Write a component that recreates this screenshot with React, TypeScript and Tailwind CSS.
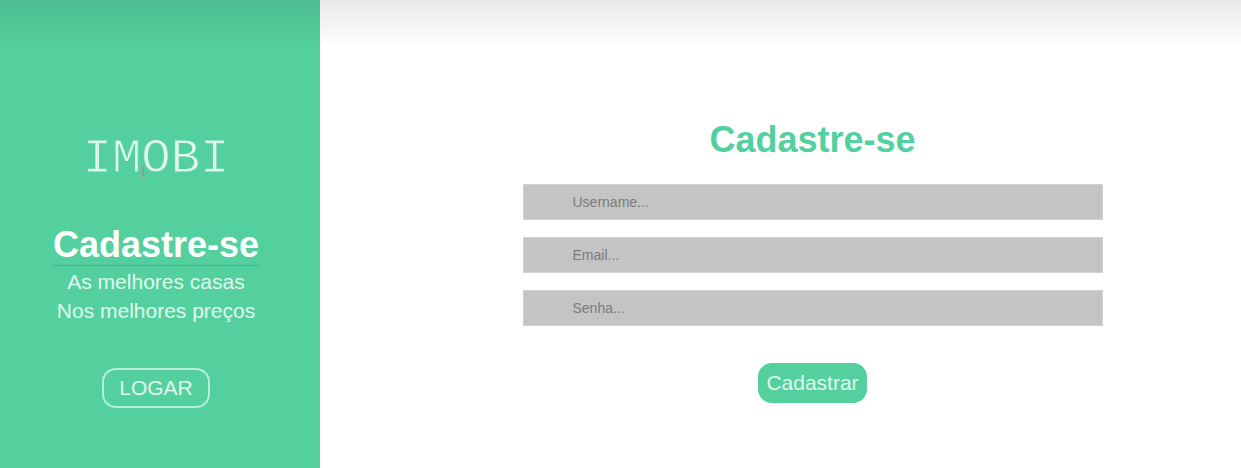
import React from "react";

const fields = [
  { id: "username", type: "text", placeholder: "Username..." },
  { id: "email", type: "email", placeholder: "Email..." },
  { id: "password", type: "password", placeholder: "Senha..." },
];

function TextCursor() {
  return (
    <svg
      aria-hidden="true"
      viewBox="0 0 6 12"
      className="absolute left-[58px] top-[35px] h-3 w-1.5"
      fill="none"
    >
      <path d="M0.5 1h5M3 1v10M0.5 11h5" stroke="#a9dcc2" strokeWidth="2" />
      <path d="M1 1h1.5M3.5 1H5M3 1.5v9M1 11h1.5M3.5 11H5" stroke="#4f7262" strokeWidth="1" />
    </svg>
  );
}

function Sidebar() {
  return (
    <aside className="flex w-80 shrink-0 flex-col items-center bg-[#54d09e] pt-[130px] pr-2 text-[21px] text-[#e0f9ee]">
      <div className="relative">
        <p className="font-['Liberation_Mono',monospace] text-[49px] leading-[58px] [-webkit-text-stroke:1px_#54d09e]">
          IMOBI
        </p>
        <TextCursor />
      </div>
      <h2 className="mt-9 border-b border-[#3fb0a2] text-[36px] leading-[41px] font-bold text-white">
        Cadastre-se
      </h2>
      <p className="mt-px text-center leading-[29px]">
        As melhores casas
        <br />
        Nos melhores preços
      </p>
      <button
        type="button"
        className="mt-[43px] h-10 rounded-[14px] border-2 border-[#b9efd8] px-[15px] leading-6"
      >
        LOGAR
      </button>
    </aside>
  );
}

function RegisterForm() {
  return (
    <main className="flex flex-1 flex-col items-center pt-[119px] pr-4 pl-20">
      <h1 className="text-[36px] leading-[41px] font-bold text-[#54d09e]">Cadastre-se</h1>
      <form
        className="mt-6 flex w-full max-w-[580px] flex-col items-center gap-[17px]"
        onSubmit={(event) => event.preventDefault()}
      >
        {fields.map((field) => (
          <input
            key={field.id}
            id={field.id}
            name={field.id}
            type={field.type}
            placeholder={field.placeholder}
            aria-label={field.placeholder.replace("...", "")}
            className="h-9 w-full border border-[#d2d2d2] bg-[#c4c4c4] px-[49px] text-[14px] text-[#333333] placeholder:text-[#7b7b7b]"
          />
        ))}
        <button
          type="submit"
          className="mt-5 h-10 rounded-[14px] bg-[#54d09e] px-2 text-[21px] leading-6 text-[#e0f9ee]"
        >
          Cadastrar
        </button>
      </form>
    </main>
  );
}

export default function App() {
  return (
    <div className="relative flex min-h-screen bg-white font-['Liberation_Sans',Arial,sans-serif]">
      <Sidebar />
      <RegisterForm />
      <div className="pointer-events-none absolute inset-x-0 top-0 h-12 bg-linear-to-b from-black/9 to-transparent" />
    </div>
  );
}
